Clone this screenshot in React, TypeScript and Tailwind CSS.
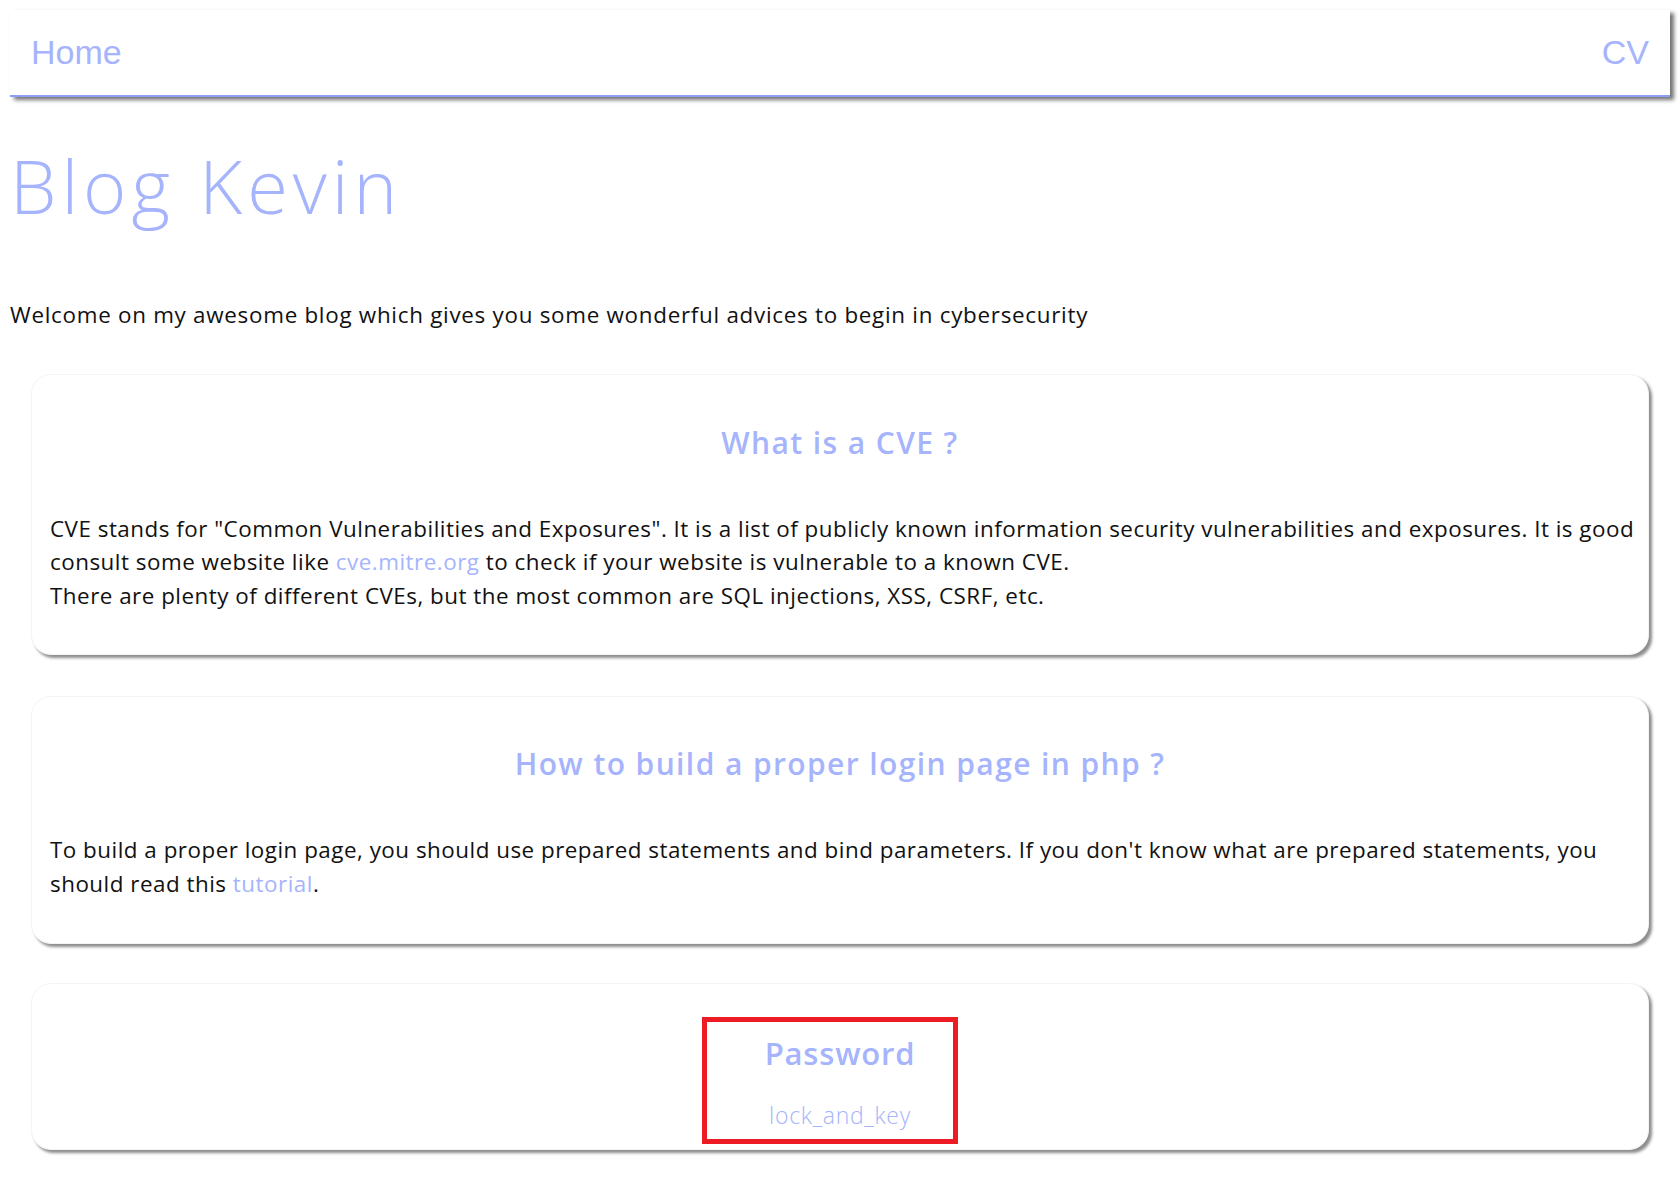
import React from 'react'

const body = { fontFamily: '"Open Sans", "Noto Sans", sans-serif' }

function Card({ title, children, className = '' }: { title: string; children: React.ReactNode; className?: string }) {
  return (
    <section
      className={`mx-[21px] rounded-[20px] bg-white border border-[#f4f4f4] shadow-[3px_3px_3px_rgba(0,0,0,0.45)] ${className}`}
    >
      <h2 className="text-center text-[30px] leading-[43px] font-semibold tracking-[1.4px] text-[#a5b4fc]" style={body}>
        {title}
      </h2>
      {children}
    </section>
  )
}

export default function App() {
  return (
    <div className="min-h-[1180px] bg-white px-[10px] pt-[10px] text-[#111] tracking-[0.72px]" style={body}>
      <nav
        className="flex h-[87px] items-center justify-between border-b-2 border-[#8f9ef2] bg-white px-[21px] tracking-normal shadow-[4px_3px_4px_rgba(0,0,0,0.55)]"
        style={{ fontFamily: '"Liberation Sans", Arial, sans-serif' }}
      >
        <a className="text-[34px] text-[#a5b4fc]">Home</a>
        <a className="text-[34px] text-[#a5b4fc]">CV</a>
      </nav>

      <h1
        className="mt-[40px] text-[74px] leading-[98px] font-light tracking-[5px] text-[#a5b4fc]"
        style={{ fontFamily: '"Open Sans", "Noto Sans", sans-serif' }}
      >
        Blog Kevin
      </h1>

      <p className="mt-[63px] text-[22.4px] leading-[33.6px]">
        Welcome on my awesome blog which gives you some wonderful advices to begin in cybersecurity
      </p>

      <Card title="What is a CVE ?" className="mt-[42px] pt-[46px] pb-[42px]">
        <div className="mt-[48px] pl-[18px] pr-[10px] text-[22.4px] leading-[33.6px] tracking-[0.5px]">
          <p>
            CVE stands for "Common Vulnerabilities and Exposures". It is a list of publicly known information security
            vulnerabilities and exposures. It is good consult some website like{' '}
            <a className="text-[#a5b4fc]">cve.mitre.org</a> to check if your website is vulnerable to a known CVE.
          </p>
          <p>There are plenty of different CVEs, but the most common are SQL injections, XSS, CSRF, etc.</p>
        </div>
      </Card>

      <Card title="How to build a proper login page in php ?" className="mt-[41px] pt-[45px] pb-[42px]">
        <div className="mt-[48px] pl-[18px] pr-[10px] text-[22.4px] leading-[33.6px] tracking-[0.5px]">
          <p>
            To build a proper login page, you should use prepared statements and bind parameters. If you don't know what
            are prepared statements, you should read this <a className="text-[#a5b4fc]">tutorial</a>.
          </p>
        </div>
      </Card>

      <section className="relative mx-[21px] mt-[39px] rounded-[20px] border border-[#f4f4f4] bg-white pt-[47px] pb-[17px] shadow-[3px_3px_3px_rgba(0,0,0,0.45)]">
        <h2 className="text-center text-[31px] leading-[44px] font-semibold tracking-[0.8px] text-[#a5b4fc]">Password</h2>
        <p className="mt-[24px] text-center text-[23px] leading-[33px] font-light tracking-[0.7px] text-[#a5b4fc]">
          lock_and_key
        </p>
        <div className="absolute left-[670px] top-[33px] h-[127px] w-[256px] border-[5px] border-[#ed1c24]" />
      </section>
    </div>
  )
}
